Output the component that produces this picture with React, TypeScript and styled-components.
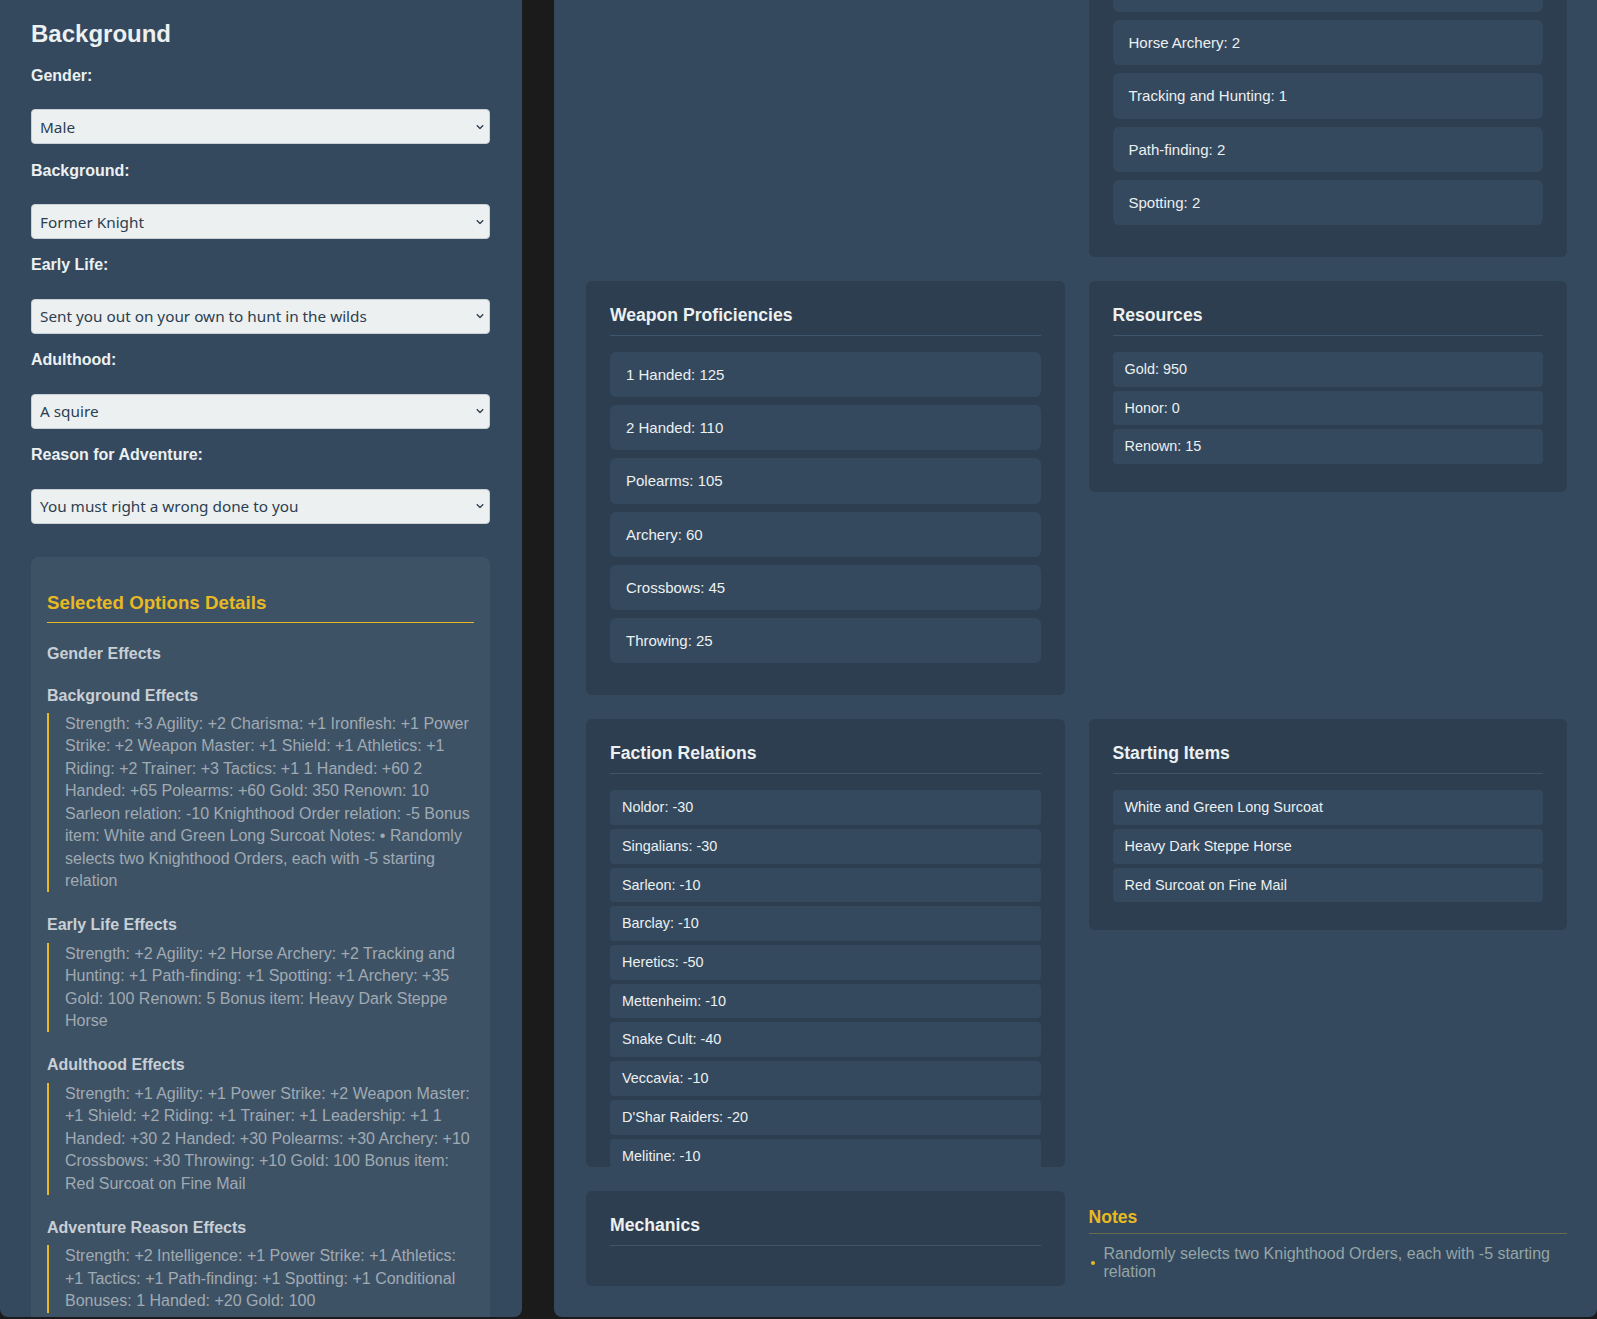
import React, { useLayoutEffect, useRef } from "react";
import styled, { createGlobalStyle } from "styled-components";

const GOLD = "#e8b923";
const LIGHT = "#ecf0f1";

const GlobalStyle = createGlobalStyle`
  html, body {
    margin: 0;
    padding: 0;
    background: #1b1b1b;
    overflow: hidden;
  }
  body {
    font-family: "Liberation Sans", Arial, sans-serif;
  }
  * { box-sizing: border-box; }
`;

const Layout = styled.div`
  display: flex;
  gap: 32px;
  height: 1317px;
`;

const LeftPanel = styled.aside`
  flex: 0 0 522px;
  height: 100%;
  background: #34495e;
  border-radius: 0 0 8px 8px;
  overflow-y: auto;
  padding: 0 32px 20px 31px;
  color: ${LIGHT};
  &::-webkit-scrollbar { width: 4px; }
  &::-webkit-scrollbar-track { background: transparent; }
  &::-webkit-scrollbar-thumb {
    background: rgba(255, 255, 255, 0.07);
    border-radius: 2px;
  }
`;

const PanelTitle = styled.h2`
  margin: 20px 0 18.9px;
  font-size: 24px;
  font-weight: 700;
  line-height: normal;
  color: ${LIGHT};
`;

const Field = styled.div`
  margin-bottom: 17.3px;
`;

const FieldLabel = styled.label`
  display: block;
  margin-bottom: 24.5px;
  font-size: 16px;
  font-weight: 700;
  line-height: normal;
  color: ${LIGHT};
`;

const SelectWrap = styled.div`
  position: relative;
`;

const Select = styled.select`
  display: block;
  width: 100%;
  height: 35px;
  appearance: none;
  -webkit-appearance: none;
  padding: 0 28px 0 8px;
  background: #ecf0f1;
  border: 1px solid #c9d1d7;
  border-radius: 4px;
  color: #2c3e50;
  font-family: "Noto Sans", "Open Sans", sans-serif;
  font-size: 15.3px;
  outline: none;
`;

const Chevron = styled.svg`
  position: absolute;
  right: 6px;
  top: 50%;
  transform: translateY(-50%);
  pointer-events: none;
`;

const DetailsBox = styled.section`
  margin-top: 33px;
  padding: 16px;
  background: rgba(255, 255, 255, 0.05);
  border-radius: 8px;
`;

const DetailsTitle = styled.h3`
  margin: 19.7px 0 21.3px;
  padding-bottom: 8px;
  border-bottom: 1px solid ${GOLD};
  font-size: 18.72px;
  font-weight: 700;
  line-height: normal;
  color: ${GOLD};
`;

const EffectSection = styled.div`
  margin-bottom: 24px;
`;

const EffectTitle = styled.h4`
  margin: 0 0 8.5px;
  font-size: 16px;
  font-weight: 700;
  line-height: normal;
  color: #c8cfd5;
`;

const EffectText = styled.div`
  border-left: 2px solid ${GOLD};
  padding-left: 16px;
  font-size: 16px;
  line-height: 22.4px;
  color: #a0aab2;
`;

const RightPanel = styled.main`
  flex: 1;
  height: 100%;
  position: relative;
  background: #34495e;
  border-radius: 0 0 8px 8px;
  overflow: hidden;
  padding: 32px 30px 40px 32px;
`;

const Grid = styled.div`
  display: grid;
  grid-template-columns: 1fr 1fr;
  gap: 24px;
  align-items: start;
`;

const Card = styled.section<{ $maxHeight?: number }>`
  background: #2c3e50;
  border-radius: 6px;
  padding: 24px;
  ${(p) => (p.$maxHeight ? `max-height: ${p.$maxHeight}px; overflow: hidden;` : "")}
`;

const CardTitle = styled.h3`
  margin: 0 0 16px;
  padding-bottom: 9px;
  border-bottom: 1px solid #3d566e;
  font-size: 17.6px;
  font-weight: 700;
  line-height: normal;
  color: ${LIGHT};
`;

const ItemList = styled.ul`
  list-style: none;
  margin: 0;
  padding: 0;
`;

const Item = styled.li<{ $compact?: boolean }>`
  background: #34495e;
  color: ${LIGHT};
  border-radius: ${(p) => (p.$compact ? "4px" : "6px")};
  padding: ${(p) => (p.$compact ? "9px 12px" : "12px 16px")};
  margin-bottom: ${(p) => (p.$compact ? "4px" : "8px")};
  font-size: ${(p) => (p.$compact ? "14.4px" : "15px")};
  line-height: ${(p) => (p.$compact ? "16.7px" : "21.2px")};
`;

const NotesBlock = styled.section`
  margin-top: 16px;
`;

const NotesTitle = styled.h4`
  margin: 0 0 11px;
  padding-bottom: 5px;
  border-bottom: 1px solid rgba(232, 185, 35, 0.3);
  font-size: 17.6px;
  font-weight: 700;
  line-height: normal;
  color: ${GOLD};
`;

const NotesList = styled.ul`
  list-style: none;
  margin: 0;
  padding: 0 0 0 2px;
`;

const NoteItem = styled.li`
  display: flex;
  align-items: center;
  gap: 9px;
  font-size: 16px;
  line-height: 17.8px;
  color: #95a5a6;
`;

const Dot = styled.span`
  flex: none;
  width: 4px;
  height: 4px;
  border-radius: 50%;
  background: ${GOLD};
`;

const fields = [
  { label: "Gender:", value: "Male", options: ["Male", "Female"] },
  { label: "Background:", value: "Former Knight", options: ["Former Knight", "Merchant", "Hunter"] },
  {
    label: "Early Life:",
    value: "Sent you out on your own to hunt in the wilds",
    options: ["Sent you out on your own to hunt in the wilds", "Raised you in a castle"],
  },
  { label: "Adulthood:", value: "A squire", options: ["A squire", "A merchant"] },
  {
    label: "Reason for Adventure:",
    value: "You must right a wrong done to you",
    options: ["You must right a wrong done to you", "Wanderlust"],
  },
];

const effects = [
  { title: "Gender Effects", text: "" },
  {
    title: "Background Effects",
    text: "Strength: +3 Agility: +2 Charisma: +1 Ironflesh: +1 Power Strike: +2 Weapon Master: +1 Shield: +1 Athletics: +1 Riding: +2 Trainer: +3 Tactics: +1 1 Handed: +60 2 Handed: +65 Polearms: +60 Gold: 350 Renown: 10 Sarleon relation: -10 Knighthood Order relation: -5 Bonus item: White and Green Long Surcoat Notes: \u2022 Randomly selects two Knighthood Orders, each with -5 starting relation",
  },
  {
    title: "Early Life Effects",
    text: "Strength: +2 Agility: +2 Horse Archery: +2 Tracking and Hunting: +1 Path-finding: +1 Spotting: +1 Archery: +35 Gold: 100 Renown: 5 Bonus item: Heavy Dark Steppe Horse",
  },
  {
    title: "Adulthood Effects",
    text: "Strength: +1 Agility: +1 Power Strike: +2 Weapon Master: +1 Shield: +2 Riding: +1 Trainer: +1 Leadership: +1 1 Handed: +30 2 Handed: +30 Polearms: +30 Archery: +10 Crossbows: +30 Throwing: +10 Gold: 100 Bonus item: Red Surcoat on Fine Mail",
  },
  {
    title: "Adventure Reason Effects",
    text: "Strength: +2 Intelligence: +1 Power Strike: +1 Athletics: +1 Tactics: +1 Path-finding: +1 Spotting: +1 Conditional Bonuses: 1 Handed: +20 Gold: 100",
  },
];

const attributes = ["Strength: 13", "Agility: 10", "Intelligence: 6", "Charisma: 6"];
const skills = [
  "Ironflesh: 1",
  "Power Strike: 4",
  "Weapon Master: 3",
  "Shield: 2",
  "Athletics: 2",
  "Riding: 3",
  "Horse Archery: 2",
  "Tracking and Hunting: 1",
  "Path-finding: 2",
  "Spotting: 2",
];
const weapons = [
  "1 Handed: 125",
  "2 Handed: 110",
  "Polearms: 105",
  "Archery: 60",
  "Crossbows: 45",
  "Throwing: 25",
];
const resources = ["Gold: 950", "Honor: 0", "Renown: 15"];
const factions = [
  "Noldor: -30",
  "Singalians: -30",
  "Sarleon: -10",
  "Barclay: -10",
  "Heretics: -50",
  "Mettenheim: -10",
  "Snake Cult: -40",
  "Veccavia: -10",
  "D'Shar Raiders: -20",
  "Melitine: -10",
];
const items = ["White and Green Long Surcoat", "Heavy Dark Steppe Horse", "Red Surcoat on Fine Mail"];

function StatCard({
  title,
  entries,
  compact,
  maxHeight,
  cardRef,
}: {
  title: string;
  entries: string[];
  compact?: boolean;
  maxHeight?: number;
  cardRef?: React.Ref<HTMLElement>;
}) {
  return (
    <Card ref={cardRef} $maxHeight={maxHeight}>
      <CardTitle>{title}</CardTitle>
      <ItemList>
        {entries.map((e) => (
          <Item key={e} $compact={compact}>
            {e}
          </Item>
        ))}
      </ItemList>
    </Card>
  );
}

export default function App() {
  const panelRef = useRef<HTMLElement>(null);
  const weaponRef = useRef<HTMLElement>(null);

  useLayoutEffect(() => {
    const panel = panelRef.current;
    const card = weaponRef.current;
    if (panel && card) {
      panel.scrollTop = card.offsetTop - 281;
    }
  }, []);

  return (
    <>
      <GlobalStyle />
      <Layout>
        <LeftPanel>
          <PanelTitle>Background</PanelTitle>
          {fields.map((f) => (
            <Field key={f.label}>
              <FieldLabel>{f.label}</FieldLabel>
              <SelectWrap>
                <Select defaultValue={f.value}>
                  {f.options.map((o) => (
                    <option key={o} value={o}>
                      {o}
                    </option>
                  ))}
                </Select>
                <Chevron width="8" height="5" viewBox="0 0 8 5">
                  <polyline points="0.8,0.8 4,4 7.2,0.8" fill="none" stroke="#2c3e50" strokeWidth="1.3" />
                </Chevron>
              </SelectWrap>
            </Field>
          ))}
          <DetailsBox>
            <DetailsTitle>Selected Options Details</DetailsTitle>
            {effects.map((e) => (
              <EffectSection key={e.title}>
                <EffectTitle>{e.title}</EffectTitle>
                {e.text && <EffectText>{e.text}</EffectText>}
              </EffectSection>
            ))}
          </DetailsBox>
        </LeftPanel>

        <RightPanel ref={panelRef}>
          <Grid>
            <StatCard title="Attributes" entries={attributes} />
            <StatCard title="Skills" entries={skills} />
            <StatCard title="Weapon Proficiencies" entries={weapons} cardRef={weaponRef} />
            <StatCard title="Resources" entries={resources} compact />
            <StatCard title="Faction Relations" entries={factions} compact maxHeight={448} />
            <StatCard title="Starting Items" entries={items} compact />
            <StatCard title="Mechanics" entries={[]} />
            <NotesBlock>
              <NotesTitle>Notes</NotesTitle>
              <NotesList>
                <NoteItem>
                  <Dot />
                  <span>Randomly selects two Knighthood Orders, each with -5 starting relation</span>
                </NoteItem>
              </NotesList>
            </NotesBlock>
          </Grid>
        </RightPanel>
      </Layout>
    </>
  );
}
